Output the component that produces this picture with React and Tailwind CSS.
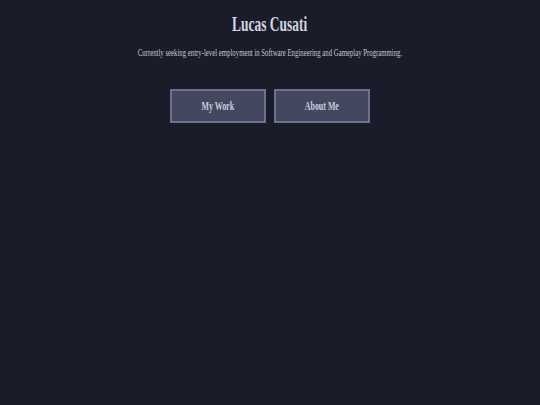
// Landing header: name, tagline and two nav buttons
const LINKS = [
  { label: 'My Work', href: '#work' },
  { label: 'About Me', href: '#about' },
]

export default function App() {
  return (
    <div className="min-h-[405px] bg-[#1a1d29] font-['Liberation_Serif',serif] text-[#d2d5e2]">
      <header className="flex flex-col items-center pt-[12px]">
        <h1 className="h-[25px] text-[21px] leading-[25px] font-bold">
          <span className="inline-block scale-x-[0.64]">Lucas Cusati</span>
        </h1>
        <p className="mt-[10px] text-[10.5px] leading-[12px] text-[#c3c6d3] whitespace-nowrap">
          <span className="inline-block scale-x-[0.645]">
            Currently seeking entry-level employment in Software Engineering and Gameplay Programming.
          </span>
        </p>

        <nav className="mt-[30px] flex gap-[8px]">
          {LINKS.map(link => (
            <a
              key={link.label}
              href={link.href}
              className="flex h-[34px] w-[96px] items-center justify-center border-2 border-[#6b7290] bg-[#43475f] text-[12px] font-bold text-[#cbcdda]"
            >
              <span className="inline-block scale-x-[0.66]">{link.label}</span>
            </a>
          ))}
        </nav>
      </header>
    </div>
  )
}
